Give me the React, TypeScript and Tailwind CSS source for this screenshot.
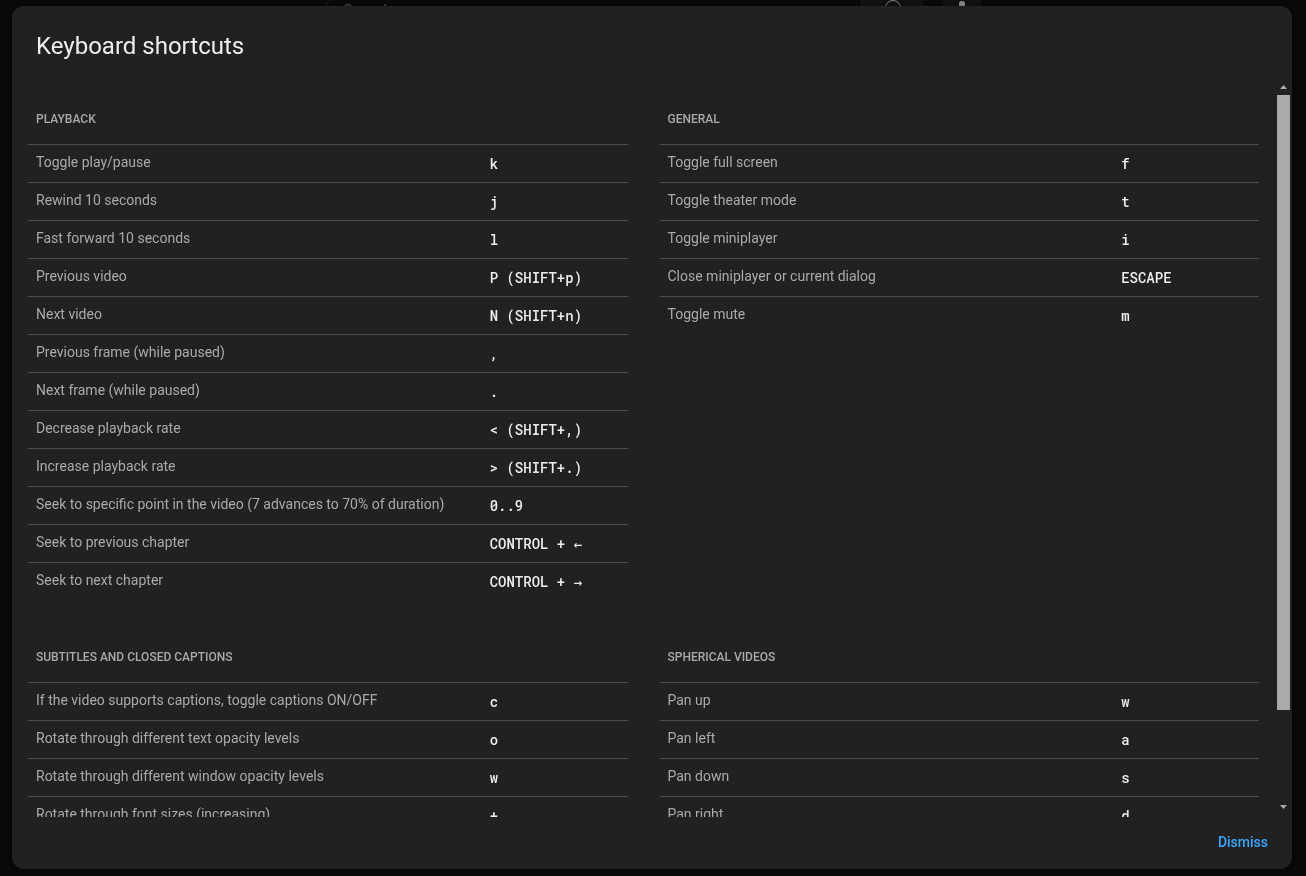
import React, { useEffect, useRef, useState } from "react";

type Shortcut = { label: string; keys: string };
type Section = { title: string; shortcuts: Shortcut[] };

const SECTIONS: Section[] = [
  {
    title: "Playback",
    shortcuts: [
      { label: "Toggle play/pause", keys: "k" },
      { label: "Rewind 10 seconds", keys: "j" },
      { label: "Fast forward 10 seconds", keys: "l" },
      { label: "Previous video", keys: "P (SHIFT+p)" },
      { label: "Next video", keys: "N (SHIFT+n)" },
      { label: "Previous frame (while paused)", keys: "," },
      { label: "Next frame (while paused)", keys: "." },
      { label: "Decrease playback rate", keys: "< (SHIFT+,)" },
      { label: "Increase playback rate", keys: "> (SHIFT+.)" },
      { label: "Seek to specific point in the video (7 advances to 70% of duration)", keys: "0..9" },
      { label: "Seek to previous chapter", keys: "CONTROL + ←" },
      { label: "Seek to next chapter", keys: "CONTROL + →" },
    ],
  },
  {
    title: "General",
    shortcuts: [
      { label: "Toggle full screen", keys: "f" },
      { label: "Toggle theater mode", keys: "t" },
      { label: "Toggle miniplayer", keys: "i" },
      { label: "Close miniplayer or current dialog", keys: "ESCAPE" },
      { label: "Toggle mute", keys: "m" },
    ],
  },
  {
    title: "Subtitles and closed captions",
    shortcuts: [
      { label: "If the video supports captions, toggle captions ON/OFF", keys: "c" },
      { label: "Rotate through different text opacity levels", keys: "o" },
      { label: "Rotate through different window opacity levels", keys: "w" },
      { label: "Rotate through font sizes (increasing)", keys: "+" },
      { label: "Rotate through font sizes (decreasing)", keys: "-" },
    ],
  },
  {
    title: "Spherical videos",
    shortcuts: [
      { label: "Pan up", keys: "w" },
      { label: "Pan left", keys: "a" },
      { label: "Pan down", keys: "s" },
      { label: "Pan right", keys: "d" },
      { label: "Zoom in", keys: "+ or ]" },
      { label: "Zoom out", keys: "- or [" },
    ],
  },
];

const ShortcutSection: React.FC<{ section: Section }> = ({ section }) => (
  <section className="px-4 pb-[18px]">
    <h2 className="px-2 pt-7 pb-[15px] text-xs leading-5 font-medium text-[#aaaaaa] uppercase">
      {section.title}
    </h2>
    <table className="w-full table-fixed border-collapse text-sm leading-5" aria-label={section.title}>
      <tbody>
        {section.shortcuts.map((s) => (
          <tr key={s.label} className="h-[38px] border-t border-[#4d4d4d] align-top">
            <th scope="row" className="w-3/4 pt-[7px] pl-2 text-left font-normal text-[#aaaaaa]">
              {s.label}
            </th>
            <td className="pt-[9px] pl-3 font-['Roboto_Mono','DejaVu_Sans_Mono',monospace] font-medium text-[#eeeeee]">
              {s.keys}
            </td>
          </tr>
        ))}
      </tbody>
    </table>
  </section>
);

const Masthead: React.FC = () => (
  <header className="flex h-[18px] items-center justify-center gap-[18px] pl-0.5">
    <div className="flex h-10 w-[598px] shrink-0">
      <input
        type="text"
        placeholder="Search"
        aria-label="Search"
        className="min-w-0 flex-1 rounded-l-full border border-r-0 border-[#222222] bg-[#0a0a0a] px-4 pt-1 text-base placeholder:text-[#5a5a5a]"
      />
      <button
        type="button"
        aria-label="Submit search"
        className="flex w-[63px] items-center justify-center rounded-r-full border border-[#1c1c1c] bg-[#151515]"
      >
        <svg viewBox="0 0 24 24" className="h-6 w-6" fill="none" stroke="#9a9a9a">
          <circle cx="12" cy="11" r="7.5" />
          <path d="m17.500 16.500 5 5" />
        </svg>
      </button>
    </div>
    <button
      type="button"
      aria-label="Search with your voice"
      className="flex h-10 w-10 shrink-0 items-center justify-center rounded-full bg-[#151515]"
    >
      <svg viewBox="0 0 24 24" className="h-6 w-6" fill="#a5a5a5">
        <rect x="9" y="4" width="6" height="11" rx="3" />
        <path d="M18 12h-1a5 5 0 0 1-10 0H6a6 6 0 0 0 5.500 6v3h1v-3A6 6 0 0 0 18 12Z" />
      </svg>
    </button>
  </header>
);

const App: React.FC = () => {
  const scroller = useRef<HTMLDivElement>(null);
  const [thumb, setThumb] = useState({ top: 0, height: 100 });

  const updateThumb = () => {
    const el = scroller.current;
    if (!el) return;
    setThumb({
      top: (el.scrollTop / el.scrollHeight) * 100,
      height: (el.clientHeight / el.scrollHeight) * 100,
    });
  };

  useEffect(() => {
    updateThumb();
    window.addEventListener("resize", updateThumb);
    return () => window.removeEventListener("resize", updateThumb);
  }, []);

  const scrollBy = (top: number) => scroller.current?.scrollBy({ top });

  return (
    <div className="min-h-screen bg-[#0a0a0a] font-[Roboto,sans-serif]">
      <Masthead />

      <div className="fixed inset-0 flex pt-1.5 pr-3.5 pb-[7px] pl-3">
        <div
          role="dialog"
          aria-labelledby="dialog-title"
          className="flex min-w-0 flex-1 flex-col rounded-xl bg-[#212121] shadow-[0_0_16px_rgba(0,0,0,0.6)]"
        >
          <h1 id="dialog-title" className="px-6 pt-6 pb-[19px] text-2xl leading-8 text-[#eeeeee]">
            Keyboard shortcuts
          </h1>

          <div className="flex min-h-0 flex-1">
            <div
              ref={scroller}
              onScroll={updateThumb}
              className="grid min-w-0 flex-1 grid-cols-2 content-start overflow-y-auto [scrollbar-width:none]"
            >
              {SECTIONS.map((section) => (
                <ShortcutSection key={section.title} section={section} />
              ))}
            </div>

            {/* Scrollbar */}
            <div className="flex w-[17px] flex-col px-0.5">
              <button
                type="button"
                aria-label="Scroll up"
                className="flex h-3.5 items-start justify-center pt-1"
                onClick={() => scrollBy(-38)}
              >
                <svg width="7" height="4" viewBox="0 0 7 4" fill="#aaaaaa">
                  <path d="M0 4 3.500 0 7 4Z" />
                </svg>
              </button>
              <div className="min-h-0 flex-1">
                <div style={{ height: `${thumb.top}%` }} />
                <div className="bg-[#aaaaaa]" style={{ height: `${thumb.height}%` }} />
              </div>
              <button
                type="button"
                aria-label="Scroll down"
                className="flex h-3.5 items-start justify-center pt-0.5"
                onClick={() => scrollBy(38)}
              >
                <svg width="7" height="4" viewBox="0 0 7 4" fill="#aaaaaa">
                  <path d="M0 0 3.500 4 7 0Z" />
                </svg>
              </button>
            </div>
          </div>

          <div className="flex justify-end px-6 pt-[7px] pb-[9px]">
            <button type="button" className="h-9 text-sm font-medium text-[#3ea6ff]">
              Dismiss
            </button>
          </div>
        </div>
      </div>
    </div>
  );
};

export default App;
